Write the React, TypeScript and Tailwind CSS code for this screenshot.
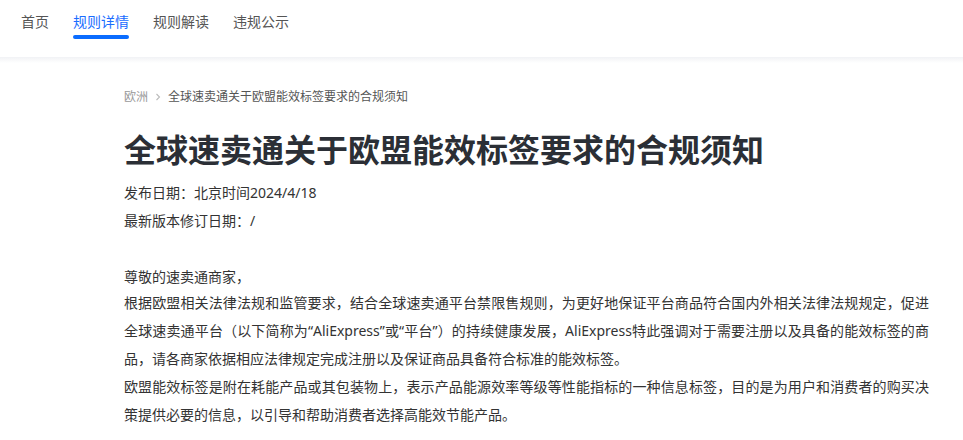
import React from "react";

const tabs = ["首页", "规则详情", "规则解读", "违规公示"];

export default function App() {
  return (
    <div className="min-h-screen bg-white text-[#333333] font-['Noto_Sans','Noto_Sans_CJK_SC',sans-serif]">
      {/* top nav */}
      <header className="h-[57px] bg-white">
        <nav className="flex gap-6 pl-[21px] pt-[11px]">
          {tabs.map((t, i) => (
            <div key={t} className="flex flex-col">
              <span className={`text-[14px] leading-[22px] ${i === 1 ? "text-[#1a6dff]" : "text-[#555555]"}`}>{t}</span>
              {i === 1 && <span className="mt-[2px] h-1 rounded-full bg-[#0a6cff]" />}
            </div>
          ))}
        </nav>
      </header>
      <div className="h-[6px] bg-gradient-to-b from-[#f1f2f5] to-white" />

      <main className="pl-[124px] pt-[24px]">
        {/* breadcrumb */}
        <div className="flex items-center text-[12px] leading-[20px]">
          <span className="text-[#999999]">欧洲</span>
          <span className="ml-[6px] mr-[6px] text-[#bbbbbb]">
            <svg width="8" height="8" viewBox="0 0 8 8" fill="none" stroke="currentColor" strokeWidth="1.1">
              <path d="M2.5 1 L5.5 4 L2.5 7" />
            </svg>
          </span>
          <span className="text-[#555555]">全球速卖通关于欧盟能效标签要求的合规须知</span>
        </div>

        <h1 className="mt-[19px] text-[32px] leading-[48px] font-bold text-[#2b2f36]">
          全球速卖通关于欧盟能效标签要求的合规须知
        </h1>

        <div className="mt-[5px] text-[14px] leading-[28px]">
          <p>发布日期：北京时间2024/4/18</p>
          <p>最新版本修订日期：/</p>
        </div>

        <div className="mt-[30px] w-[805px] text-[14px] text-justify">
          <p className="leading-[24px]">尊敬的速卖通商家，</p>
          <p className="leading-[28px]">
            根据欧盟相关法律法规和监管要求，结合全球速卖通平台禁限售规则，为更好地保证平台商品符合国内外相关法律法规规定，促进全球速卖通平台（以下简称为“AliExpress”或“平台”）的持续健康发展，AliExpress特此强调对于需要注册以及具备的能效标签的商品，请各商家依据相应法律规定完成注册以及保证商品具备符合标准的能效标签。
          </p>
          <p className="leading-[28px]">
            欧盟能效标签是附在耗能产品或其包装物上，表示产品能源效率等级等性能指标的一种信息标签，目的是为用户和消费者的购买决策提供必要的信息，以引导和帮助消费者选择高能效节能产品。
          </p>
        </div>
      </main>
    </div>
  );
}
